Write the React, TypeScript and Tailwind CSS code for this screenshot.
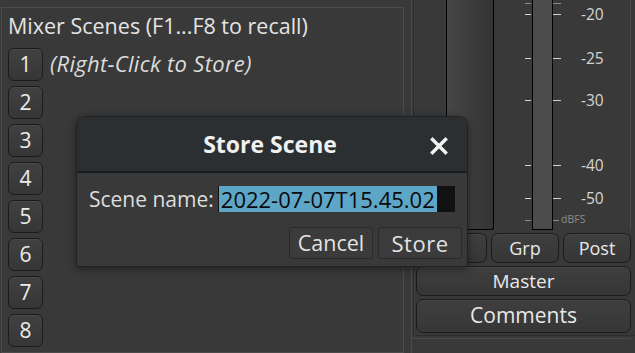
import React from "react";

const FONT = { fontFamily: '"Open Sans", "DejaVu Sans", sans-serif' };

const scale = [
  { y: 3, label: "", minor: true },
  { y: 14, label: "-20" },
  { y: 58, label: "-25" },
  { y: 100, label: "-30" },
  { y: 165, label: "-40" },
  { y: 198, label: "-50" },
];

function SceneButton({ n }: { n: number }) {
  return (
    <button className="w-[35px] h-[33px] rounded-[6px] border border-[#1b1b1b] bg-gradient-to-b from-[#414141] to-[#363636] text-[21px] leading-none text-[#ececec] flex items-center justify-center shadow-[inset_0_1px_0_#4a4a4a]">
      {n}
    </button>
  );
}

function StripButton({ label, className = "" }: { label: string; className?: string }) {
  return (
    <button
      className={`rounded-[7px] border border-[#1b1b1b] bg-gradient-to-b from-[#3f3f3f] to-[#363636] text-[#e8e8e8] flex items-center justify-center shadow-[inset_0_1px_0_#474747] ${className}`}
    >
      {label}
    </button>
  );
}

function Meter() {
  return (
    <div className="relative w-[138px] h-[230px]">
      {/* fader trough */}
      <div className="absolute left-[0px] top-0 w-[48px] h-[230px] border-x border-b border-black rounded-b-[3px] bg-gradient-to-r from-[#464646] to-[#343434]" />
      {/* meter bar */}
      <div className="absolute left-[86px] top-0 w-[21px] h-[230px] border-x border-b border-black bg-[#4c4c4c]" />
      {scale.map((s) => (
        <React.Fragment key={s.y}>
          <div
            className={`absolute left-[79px] w-[6px] h-px ${s.minor ? "bg-[#8a8a8a]" : "bg-[#d0d0d0]"}`}
            style={{ top: s.y }}
          />
          <div
            className={`absolute left-[107px] w-[8px] h-px ${s.minor ? "bg-[#8a8a8a]" : "bg-[#d0d0d0]"}`}
            style={{ top: s.y }}
          />
          {s.label && (
            <span
              className="absolute left-[135px] text-[15.5px] leading-none text-[#d4d4d4] -translate-y-1/2"
              style={{ top: s.y + 0.5 }}
            >
              {s.label}
            </span>
          )}
        </React.Fragment>
      ))}
      <div className="absolute left-[79px] top-[220px] w-[6px] h-px bg-[#8a8a8a]" />
      <div className="absolute left-[107px] top-[220px] w-[6px] h-px bg-[#8a8a8a]" />
      <span className="absolute left-[115px] top-[214px] text-[10.5px] leading-none text-[#8c8c8c]">dBFS</span>
    </div>
  );
}

export default function App() {
  return (
    <div className="relative w-[635px] h-[353px] overflow-hidden bg-[#393939] flex" style={FONT}>
      {/* Scenes panel */}
      <div className="w-[404px] h-[353px] pt-[7px] pl-[1px] flex-none">
        <div className="h-[346px] border-t border-x border-b border-[#4b4b4b] pl-[6px] pt-[5px] flex flex-col">
          <div className="text-[21.5px] leading-[26px] text-[#e4e4e4]">
            Mixer Scenes (F1...F8 to recall)
          </div>
          <div className="mt-[9px] flex flex-col gap-[5px]">
            {[1, 2, 3, 4, 5, 6, 7, 8].map((n) => (
              <div key={n} className="flex items-center gap-[7px] h-[33px]">
                <SceneButton n={n} />
                {n === 1 && (
                  <span className="italic text-[22px] leading-none text-[#dcdcdc] tracking-[0.3px] -mt-[3px]">(Right-Click to Store)</span>
                )}
              </div>
            ))}
          </div>
        </div>
      </div>

      {/* Mixer strip */}
      <div className="flex-1 h-[353px] flex flex-col">
        <div className="flex-1 ml-[7px] border-l border-[#4a4a4a] flex flex-col">
          <div className="ml-[1px] border-l border-[#2e2e2e] pl-[2px] pr-[4px] flex flex-col h-[336px] border-b">
            <div className="flex">
              <div className="ml-[30px] flex-1 border-r border-[#4a4a4a]">
                <Meter />
              </div>
            </div>
            <div className="flex gap-[4px] mt-[3px] text-[18px] h-[30px]">
              <StripButton label="" className="flex-1" />
              <StripButton label="Grp" className="w-[68px]" />
              <StripButton label="Post" className="w-[68px]" />
            </div>
            <StripButton label="Master" className="mt-[3px] h-[30px] text-[19px]" />
            <StripButton label="Comments" className="mt-[3px] h-[34px] text-[21px]" />
          </div>
          <div className="mt-[2px] border-t border-[#4a4a4a] h-[12px] mr-[4px]" />
        </div>
      </div>

      {/* Store Scene dialog */}
      <div className="absolute left-[76px] top-[116px] w-[392px] h-[151px] rounded-t-[9px] border border-[#1f2122] overflow-hidden shadow-[0_2px_8px_rgba(0,0,0,0.45)] flex flex-col">
        <div className="h-[56px] bg-[#2c2f31] border-b-2 border-[#1a1b1c] relative flex items-center justify-center">
          <span className="font-bold text-[23px] leading-none text-[#f0f0f0] -ml-[4px]">Store Scene</span>
          <svg
            className="absolute left-[353px] top-[20px]"
            width="18"
            height="18"
            viewBox="0 0 18 18"
          >
            <path d="M2.5 2.5 L15.5 15.5 M15.5 2.5 L2.5 15.5" stroke="#f2f2f2" strokeWidth="3.4" strokeLinecap="square" />
          </svg>
        </div>
        <div className="flex-1 bg-[#393939] flex flex-col pl-[12px] pr-[5px] pt-[13px]">
          <div className="flex items-center h-[26px]">
            <span className="text-[21px] leading-none text-[#dedede] mr-[4px]">Scene name:</span>
            <div className="w-[237px] h-[26px] bg-[#111111] flex items-center">
              <span className="ml-[1px] h-[26px] px-[2px] bg-[#5ea6c8] text-[22px] leading-[26px] text-[#0a0a0a]">
                2022-07-07T15.45.02
              </span>
            </div>
          </div>
          <div className="mt-[15px] flex justify-end gap-[5px]">
            <button className="w-[84px] h-[32px] rounded-[3px] border border-[#2a2a2a] bg-[#3b3b3b] text-[21.5px] leading-none text-[#e2e2e2]">
              Cancel
            </button>
            <button className="w-[84px] h-[32px] rounded-[3px] border border-[#2a2a2a] bg-[#3b3b3b] text-[22px] leading-none text-[#e2e2e2] tracking-[0.5px]">
              Store
            </button>
          </div>
        </div>
      </div>
    </div>
  );
}
